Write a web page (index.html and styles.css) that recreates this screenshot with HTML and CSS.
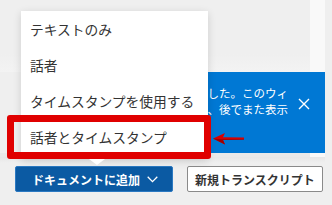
FILE: index.html
```html
<!DOCTYPE html>
<html lang="ja">
<head>
<meta charset="utf-8">
<title>トランスクリプト</title>
<link rel="stylesheet" href="styles.css">
</head>
<body>
<div class="app">
  <div class="upper"><div class="fill"></div><div class="strip"></div></div>
  <div class="banner">
    <p class="banner-text"><span>した。このウィ</span><span>、後でまた表示</span></p>
    <button class="close" aria-label="閉じる"><svg width="12" height="12" viewBox="0 0 12 12"><path d="M1 1 L11 11 M11 1 L1 11" stroke="#fff" stroke-width="1.4" fill="none"/></svg></button>
  </div>
  <div class="lower"><div class="fill"></div><div class="strip"></div></div>
  <div class="footer">
    <button class="btn btn-primary">ドキュメントに追加<svg width="11" height="7" viewBox="0 0 11 7"><path d="M0.7 0.8 L5.5 5.6 L10.3 0.8" stroke="#fff" stroke-width="1.3" fill="none"/></svg></button>
    <button class="btn btn-secondary">新規トランスクリプト</button>
  </div>
</div>
<ul class="menu">
  <li class="menu-item">テキストのみ</li>
  <li class="menu-item">話者</li>
  <li class="menu-item">タイムスタンプを使用する</li>
  <li class="menu-item">話者とタイムスタンプ</li>
</ul>
<div class="highlight"></div>
<svg class="arrow" width="32" height="14" viewBox="0 0 32 14"><path d="M0 6.5 L12 1 L10 5.2 L31 5.6 L31 7.6 L10 8 L12 12.5 Z" fill="#d80000"/><path d="M0 6.5 L12 12.5 L10 8 L31 7.6 L31 7 L9 7.2 Z" fill="#a00000"/></svg>
</body>
</html>
```
FILE: styles.css
```css
body {
  margin: 0;
  width: 332px;
  height: 205px;
  overflow: hidden;
  position: relative;
  background: #efefef;
  font-family: "Noto Sans CJK JP", sans-serif;
}
.app {
  width: 325px;
  display: flex;
  flex-direction: column;
}
.upper {
  height: 72px;
  display: flex;
}
.fill {
  flex: 1;
}
.upper .fill {
  background: linear-gradient(#efefef 75%, #f3f3f3);
}
.strip {
  width: 15px;
  background: #f9f9f9;
}
.banner {
  height: 81px;
  margin-left: 24px;
  background: #0078d4;
  display: flex;
  overflow: hidden;
  color: #fff;
}
.banner-text {
  flex: 1;
  min-width: 0;
  margin: 0;
  padding-top: 13px;
  font-size: 11.5px;
  line-height: 16px;
  text-align: right;
  white-space: nowrap;
}
.banner-text span {
  display: block;
}
.close {
  width: 12px;
  height: 12px;
  margin: 26px 15px 0 10px;
  padding: 0;
  border: 0;
  background: none;
  display: flex;
}
.lower {
  height: 4px;
  display: flex;
}
.lower .fill {
  background: #e9e9e9;
}
.footer {
  display: flex;
  gap: 14px;
  padding: 9px 0 0 15px;
  background: linear-gradient(#e6e6e6, #efefef 6px);
}
.btn {
  height: 26px;
  box-sizing: border-box;
  display: flex;
  align-items: center;
  padding: 0;
  border-radius: 2px;
  font: bold 12px "Noto Sans CJK JP", sans-serif;
}
.btn-primary {
  width: 158px;
  padding-left: 16px;
  gap: 7px;
  background: #0b5aa3;
  border: 1px solid #2b79c2;
  color: #fff;
}
.btn-secondary {
  width: 136px;
  justify-content: center;
  background: #fff;
  border: 1px solid #8a8a8a;
  color: #333;
}
.menu {
  position: absolute;
  left: 21px;
  top: 11px;
  width: 187px;
  height: 148px;
  box-sizing: border-box;
  margin: 0;
  padding: 0 0 4px;
  list-style: none;
  background: #fff;
  box-shadow: 0 2px 8px rgba(0, 0, 0, 0.14);
}
.menu::after {
  content: "";
  position: absolute;
  left: 68px;
  bottom: -6px;
  border-left: 8px solid transparent;
  border-right: 8px solid transparent;
  border-top: 6px solid #fff;
}
.menu-item {
  height: 36px;
  line-height: 36px;
  padding-left: 9px;
  font-size: 13.75px;
  color: #333;
  white-space: nowrap;
}
.highlight {
  position: absolute;
  left: 7px;
  top: 115px;
  width: 204px;
  height: 44px;
  box-sizing: border-box;
  border: 7px solid #e00000;
  border-radius: 3px;
}
.arrow {
  position: absolute;
  left: 213px;
  top: 132px;
}
```
